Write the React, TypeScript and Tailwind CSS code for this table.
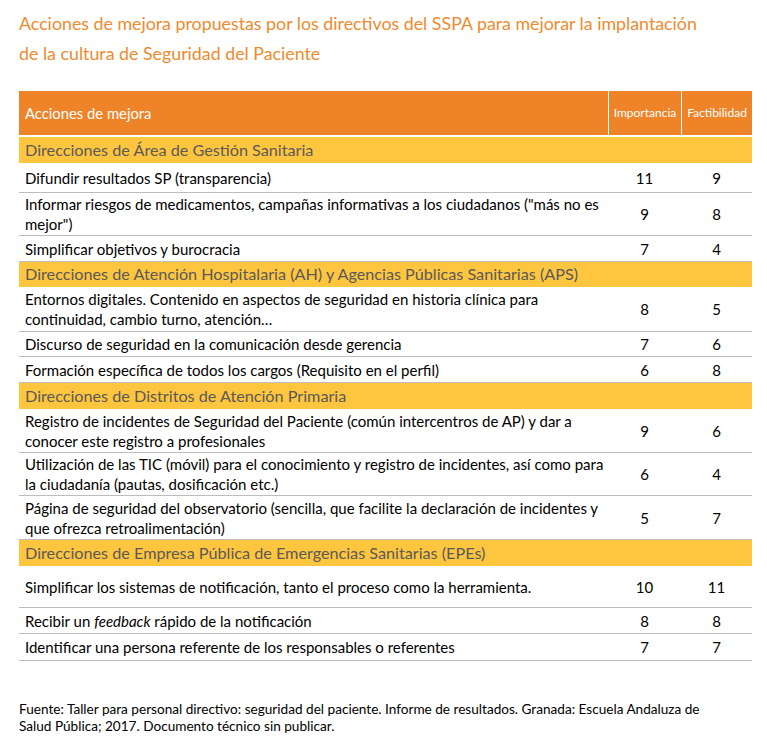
import React from "react";

type Row =
  | { kind: "section"; label: string; h: string }
  | { kind: "item"; label: React.ReactNode; imp: number; fac: number; h: string };

const rows: Row[] = [
  { kind: "section", label: "Direcciones de Área de Gestión Sanitaria", h: "h-[26px]" },
  { kind: "item", label: "Difundir resultados SP (transparencia)", imp: 11, fac: 9, h: "h-[30px]" },
  {
    kind: "item",
    label: 'Informar riesgos de medicamentos, campañas informativas a los ciudadanos ("más no es mejor")',
    imp: 9,
    fac: 8,
    h: "h-[43px]",
  },
  { kind: "item", label: "Simplificar objetivos y burocracia", imp: 7, fac: 4, h: "h-[26px]" },
  {
    kind: "section",
    label: "Direcciones de Atención Hospitalaria (AH) y Agencias Públicas Sanitarias (APS)",
    h: "h-[25px]",
  },
  {
    kind: "item",
    label: "Entornos digitales. Contenido en aspectos de seguridad en historia clínica para continuidad, cambio turno, atención…",
    imp: 8,
    fac: 5,
    h: "h-[45px]",
  },
  { kind: "item", label: "Discurso de seguridad en la comunicación desde gerencia", imp: 7, fac: 6, h: "h-[25px]" },
  { kind: "item", label: "Formación específica de todos los cargos (Requisito en el perfil)", imp: 6, fac: 8, h: "h-[26px]" },
  { kind: "section", label: "Direcciones de Distritos de Atención Primaria", h: "h-[26px]" },
  {
    kind: "item",
    label: "Registro de incidentes de Seguridad del Paciente (común intercentros de AP) y dar a conocer este registro a profesionales",
    imp: 9,
    fac: 6,
    h: "h-[44px]",
  },
  {
    kind: "item",
    label: "Utilización de las TIC (móvil) para el conocimiento y registro de incidentes, así como para la ciudadanía (pautas, dosificación etc.)",
    imp: 6,
    fac: 4,
    h: "h-[43px]",
  },
  {
    kind: "item",
    label: "Página de seguridad del observatorio (sencilla, que facilite la declaración de incidentes y que ofrezca retroalimentación)",
    imp: 5,
    fac: 7,
    h: "h-[44px]",
  },
  { kind: "section", label: "Direcciones de Empresa Pública de Emergencias Sanitarias (EPEs)", h: "h-[26px]" },
  {
    kind: "item",
    label: "Simplificar los sistemas de notificación, tanto el proceso como la herramienta.",
    imp: 10,
    fac: 11,
    h: "h-[42px]",
  },
  {
    kind: "item",
    label: (
      <>
        Recibir un <em>feedback</em> rápido de la notificación
      </>
    ),
    imp: 8,
    fac: 8,
    h: "h-[26px]",
  },
  { kind: "item", label: "Identificar una persona referente de los responsables o referentes", imp: 7, fac: 7, h: "h-[27px]" },
];

const grid = "grid grid-cols-[589px_73px_71px]";

export default function App() {
  return (
    <div className="min-h-[743px] w-[767px] bg-white pl-[19px] pt-[8px] font-['Lato',sans-serif]">
      <h1 className="w-[695px] text-[17.8px] leading-[30px] text-[#ef8a2d]">
        Acciones de mejora propuestas por los directivos del SSPA para mejorar la implantación de la cultura de
        Seguridad del Paciente
      </h1>

      <div className="mt-[23px] w-[733px]">
        <div className={`${grid} h-[46px] border-b-2 border-white bg-[#ee8328] text-white`}>
          <div className="flex items-center pl-[6px] text-[14.8px]">Acciones de mejora</div>
          <div className="flex items-center justify-center border-l border-white text-[12px]">Importancia</div>
          <div className="flex items-center justify-center border-l border-white text-[12px]">Factibilidad</div>
        </div>

        {rows.map((r, i) =>
          r.kind === "section" ? (
            <div key={i} className={`flex ${r.h} items-center bg-[#fec53f] pl-[6px] text-[16.2px] text-[#5a5a5a]`}>
              {r.label}
            </div>
          ) : (
            <div key={i} className={`${grid} ${r.h} border-b border-[#bdbdbd] text-[15px] leading-[20px] text-black`}>
              <div className="flex items-center pl-[6px] pr-[4px]">
                <span>{r.label}</span>
              </div>
              <div className="flex items-center justify-center">{r.imp}</div>
              <div className="flex items-center justify-center">{r.fac}</div>
            </div>
          )
        )}
      </div>

      <p className="mt-[40px] w-[705px] text-[13.6px] leading-[17px] text-black">
        Fuente: Taller para personal directivo: seguridad del paciente. Informe de resultados. Granada: Escuela Andaluza
        de Salud Pública; 2017. Documento técnico sin publicar.
      </p>
    </div>
  );
}
